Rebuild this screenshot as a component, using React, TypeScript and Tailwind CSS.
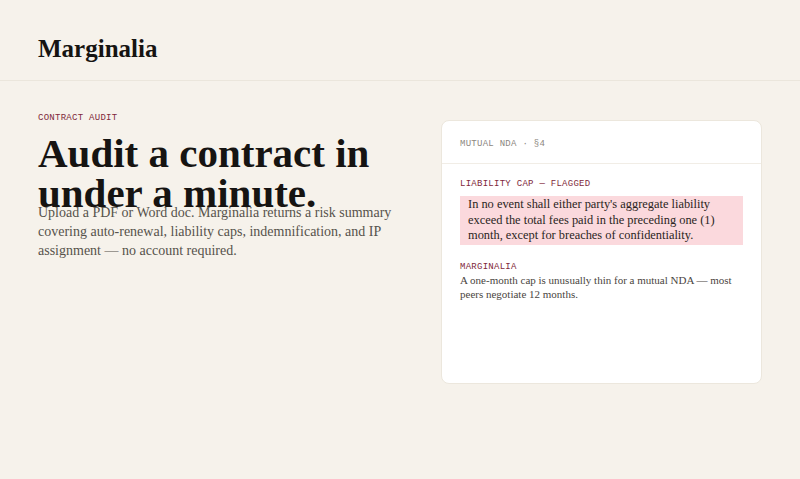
export default function App() {
  return (
    <div className="min-h-[479px] bg-[#f6f2eb] font-['Liberation_Serif',serif] text-[#161412]">
      <header className="flex h-[81px] items-center border-b border-[#ebe6dc] px-[38px]">
        <div className="pt-[17px] text-[25px] font-bold">Marginalia</div>
      </header>

      <main className="flex gap-[41px] px-[38px] pt-[31px]">
        <section className="w-[362px] shrink-0">
          <p className="font-['Liberation_Mono',monospace] text-[9px] uppercase tracking-[0.03em] text-[#80283a]">
            Contract audit
          </p>
          <h1 className="mt-[7px] h-[70px] whitespace-nowrap text-[41px] font-bold leading-[40px]">
            Audit a contract in
            <br />
            under a minute.
          </h1>
          <p className="w-[372px] text-[14px] leading-[19px] text-[#57524c]">
            Upload a PDF or Word doc. Marginalia returns a risk summary covering auto-renewal, liability caps, indemnification, and IP assignment — no account required.
          </p>
        </section>

        <aside className="mt-[8px] h-[264px] w-[321px] rounded-[8px] border border-[#ece7dd] bg-white">
          <div className="border-b border-[#f1ede6] px-[18px] pb-[11px] pt-[17px] font-['Liberation_Mono',monospace] text-[9px] uppercase tracking-[0.03em] text-[#8c8680]">
            Mutual NDA · §4
          </div>
          <div className="px-[18px] pt-[14px]">
            <p className="font-['Liberation_Mono',monospace] text-[9px] uppercase tracking-[0.03em] text-[#80283a]">
              Liability cap — flagged
            </p>
            <div className="mt-[5px] w-[283px] bg-[#fbd9dd] px-[8px] py-[1px] text-[12.4px] leading-[15.5px] text-[#2a2522]">
              In no event shall either party's aggregate liability exceed the total fees paid in the preceding one (1) month, except for breaches of confidentiality.
            </div>
            <p className="mt-[16px] font-['Liberation_Mono',monospace] text-[9px] uppercase tracking-[0.03em] text-[#80283a]">
              Marginalia
            </p>
            <p className="-mt-[1px] text-[11px] leading-[14px] text-[#4a4541]">
              A one-month cap is unusually thin for a mutual NDA — most peers negotiate 12 months.
            </p>
          </div>
        </aside>
      </main>
    </div>
  );
}
